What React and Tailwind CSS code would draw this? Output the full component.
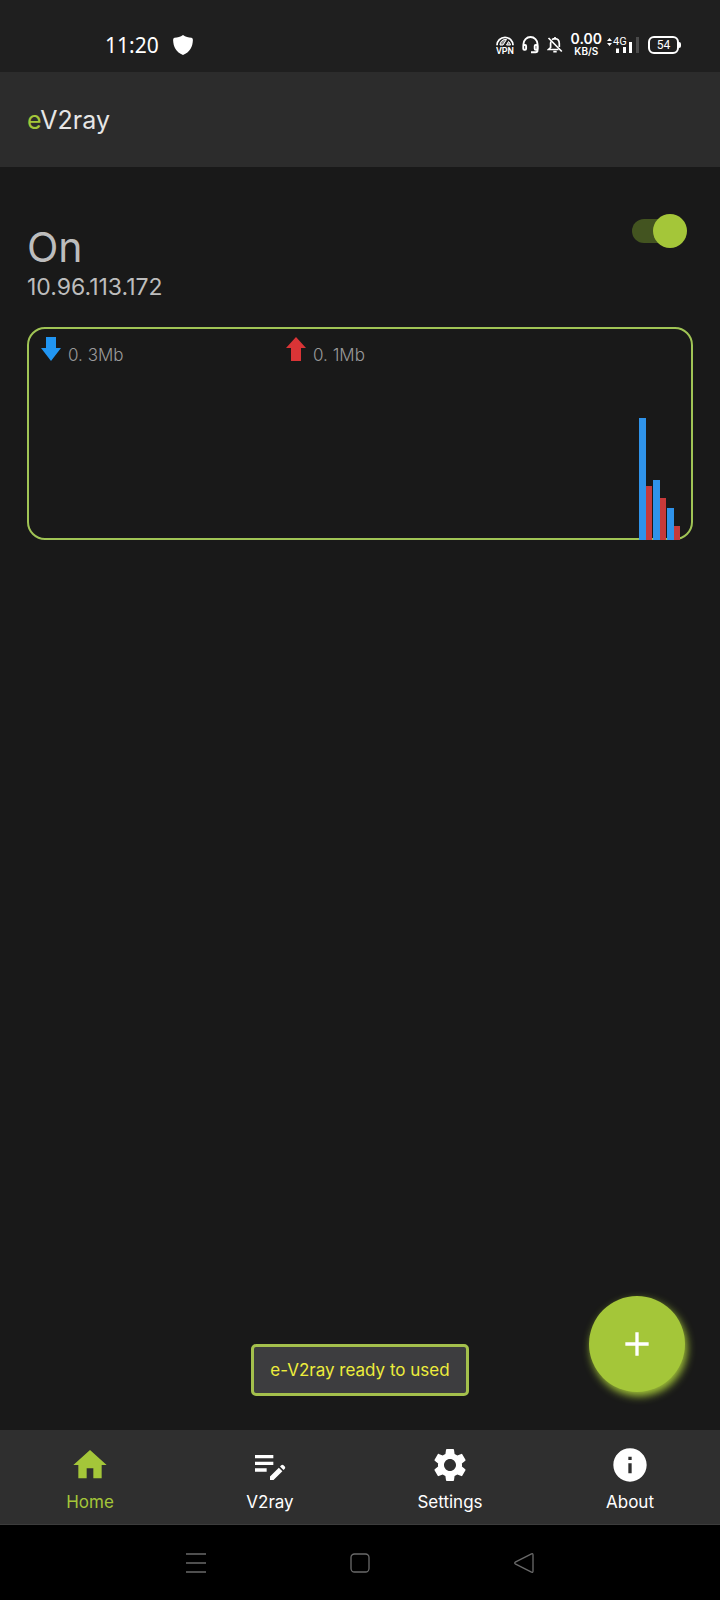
import { MdAdd, MdEditNote, MdHome, MdInfo, MdSettings } from "react-icons/md";

const tabs = [
    { name: "Home", Icon: MdHome, active: true },
    { name: "V2ray", Icon: MdEditNote },
    { name: "Settings", Icon: MdSettings },
    { name: "About", Icon: MdInfo },
];

const samples = [
    { down: 122, up: 54 },
    { down: 60, up: 42 },
    { down: 32, up: 14 },
];

function StatusBar() {
    return (
        <div className="h-[72px] pt-[18px] bg-[#1f1f1f] text-white flex items-center justify-between pl-[105px] pr-[39px]">
            <div className="flex items-center gap-x-3.5">
                <span className="text-[21px] leading-6 font-['Noto_Sans']">11:20</span>
                <svg className="w-5 h-5" viewBox="0 0 20 20" fill="currentColor">
                    <path d="M10 0C12.500 1.800 15.500 2.800 18.500 2.800Q20 3 19.900 5C19.600 12 17 17 10 20C3 17 .4 12 .1 5Q0 3 1.500 2.800C4.500 2.800 7.500 1.800 10 0Z" />
                </svg>
            </div>

            <div className="flex items-center gap-x-2">
                <svg className="w-[18px] h-[18px]" viewBox="0 0 18 18" fill="none" stroke="currentColor">
                    <path d="M1 9.300A8 8 0 0 1 17 9.300" strokeWidth="1.800" />
                    <path d="M4 9A5.500 5.500 0 0 1 10.500 3.500L7 9ZM12.500 5.500L10.500 9H14.500A6 6 0 0 0 12.500 5.500" strokeWidth="1" fill="currentColor" fillOpacity=".5" />
                    <text x="9" y="17.500" textAnchor="middle" fontSize="9" fontWeight="600" fontFamily="Roboto, sans-serif" fill="currentColor" stroke="none">VPN</text>
                </svg>
                <svg className="w-[17px] h-[18px]" viewBox="0 0 17 18" fill="none" stroke="currentColor" strokeWidth="1.900">
                    <path d="M1.500 9.500V8A7 7 0 0 1 15.500 8V14.500Q15.500 16.200 13.500 16.200H9" />
                    <rect x="1.300" y="9" width="2.800" height="4.800" rx="1" />
                    <rect x="12.700" y="9" width="2.800" height="4.800" rx="1" />
                </svg>
                <svg className="w-4 h-[18px]" viewBox="0 0 16 18" fill="none" stroke="currentColor" strokeWidth="1.700">
                    <path d="M5 3.600Q6.200 2.700 8 2.700Q12.200 3 12.300 7.500V11M11.500 13.500H1.500L3.600 11.500V7.500Q3.600 6.500 4 5.500M8 1V3" />
                    <path d="M1.500 2L14.800 15.500M6.300 15.700H9.700" />
                </svg>
                <div className="flex flex-col items-center font-[Inter] font-semibold -mr-1">
                    <span className="text-[14px] leading-3">0.00</span>
                    <span className="text-[10px] leading-3">KB/S</span>
                </div>
                <svg className="w-[34px] h-[18px]" viewBox="0 0 34 18" fill="currentColor">
                    <path d="M1 5L3.500 2L6 5ZM1 7L3.500 10L6 7Z" />
                    <text x="7" y="9" fontSize="11" fontFamily="Roboto, sans-serif">4G</text>
                    <path d="M10 12.500h3v4.500h-3zM17 11h3v6h-3zM23 6h3v11h-3z" />
                    <path d="M30 1h3v16h-3z" fill="#4a4a4a" />
                </svg>
                <div className="flex items-center">
                    <span className="w-[31px] h-[18px] rounded-md border-2 border-white text-[12px] leading-[14px] text-center font-[Roboto]">
                        54
                    </span>
                    <span className="w-0.5 h-1.5 bg-white rounded-r-sm" />
                </div>
            </div>
        </div>
    );
}

function Traffic() {
    return (
        <section className="mt-7 h-[213px] rounded-[18px] border-2 border-[#a0c455] flex flex-col justify-between">
            <div className="flex pl-3 pt-2 text-[17px] leading-5 font-light text-[#9a9a9a]">
                <div className="flex items-end gap-x-[7px] w-[245px]">
                    <svg className="w-5 h-6" viewBox="0 0 20 24" fill="#2196f3">
                        <path d="M5 0H15V11H20L10 24L0 11H5Z" />
                    </svg>
                    <span className="-mb-1">0. 3Mb</span>
                </div>
                <div className="flex items-end gap-x-[7px]">
                    <svg className="w-5 h-6" viewBox="0 0 20 24" fill="#d93436">
                        <path d="M5 24H15V11H20L10 0L0 11H5Z" />
                    </svg>
                    <span className="-mb-1">0. 1Mb</span>
                </div>
            </div>

            <div className="flex items-end justify-end gap-x-px pr-[11px] -mb-0.5">
                {samples.map((s) => (
                    <div key={s.down} className="flex items-end">
                        <div className="w-[7px] bg-[#2f93ea]" style={{ height: s.down }} />
                        <div className="w-1.5 bg-[#c73a3a]" style={{ height: s.up }} />
                    </div>
                ))}
            </div>
        </section>
    );
}

function App() {
    return (
        <div className="min-h-screen flex flex-col bg-[#191919] font-[Inter,sans-serif]">
            <StatusBar />

            <header className="h-[95px] bg-[#2c2c2c] px-[27px] flex items-center">
                <h1 className="text-[25px] leading-8 text-[#e6e6e6]">
                    <span className="text-[#a4c639]">e</span>V2ray
                </h1>
            </header>

            <main className="flex-1 flex flex-col px-[27px] pt-12">
                <div className="flex justify-between items-start">
                    <div className="text-[#bdbdbd]">
                        <p className="text-[41px] leading-[64px]">On</p>
                        <p className="text-[23px] leading-6 -mt-1">10.96.113.172</p>
                    </div>

                    <label className="relative block w-[55px] h-[34px] mr-1.5 -mt-px">
                        <input type="checkbox" role="switch" aria-label="VPN" defaultChecked className="peer sr-only" />
                        <span className="absolute left-0 top-[5px] w-12 h-6 rounded-full bg-[#435420]" />
                        <span className="absolute left-0 top-0 size-[34px] rounded-full bg-gray-300 peer-checked:left-[21px] peer-checked:bg-[#a4c639]" />
                    </label>
                </div>

                <Traffic />

                <div className="mt-auto pb-[34px] grid grid-cols-[1fr_auto_1fr] items-end">
                    <p
                        role="status"
                        className="col-start-2 h-[52px] px-4 rounded-[5px] border-3 border-[#a4c04c] bg-[#3d3d3f] text-[#eded3c] text-[17px] leading-[46px]"
                    >
                        e-V2ray ready to used
                    </p>
                    <button
                        aria-label="Add"
                        className="justify-self-end mr-2 mb-1 size-24 rounded-full bg-[#a4c639] text-white flex items-center justify-center shadow-[2px_4px_8px_#a4c639]"
                    >
                        <MdAdd className="size-10" />
                    </button>
                </div>
            </main>

            <nav className="h-[95px] bg-[#2f2f2f] border-b border-[#3c3c3c] grid grid-cols-4">
                {tabs.map(({ name, Icon, active }) => (
                    <button
                        key={name}
                        className={`flex flex-col items-center pt-[15px] text-[17px] leading-5 ${active ? "text-[#a4c639]" : "text-white"}`}
                    >
                        <Icon className="size-10" />
                        <span className="mt-[7px]">{name}</span>
                    </button>
                ))}
            </nav>

            <div className="h-[75px] bg-black text-[#6a6a6a] flex items-center justify-center gap-x-36">
                <button aria-label="Recent apps">
                    <svg className="w-5 h-5" viewBox="0 0 20 20" fill="none" stroke="currentColor" strokeWidth="1.500">
                        <path d="M0 1H20M0 10H20M0 19H20" />
                    </svg>
                </button>
                <button aria-label="Home screen">
                    <svg className="w-5 h-5" viewBox="0 0 20 20" fill="none" stroke="currentColor" strokeWidth="1.300">
                        <rect x="1" y="1" width="18" height="18" rx="3.500" />
                    </svg>
                </button>
                <button aria-label="Back">
                    <svg className="w-5 h-5" viewBox="0 0 20 20" fill="none" stroke="currentColor" strokeWidth="1.300" strokeLinejoin="round">
                        <path d="M17.500 .8Q19 .3 19 2V18Q19 19.700 17.500 19.200L1.200 10.800Q.3 10 1.200 9.200Z" />
                    </svg>
                </button>
            </div>
        </div>
    );
}

export default App;
